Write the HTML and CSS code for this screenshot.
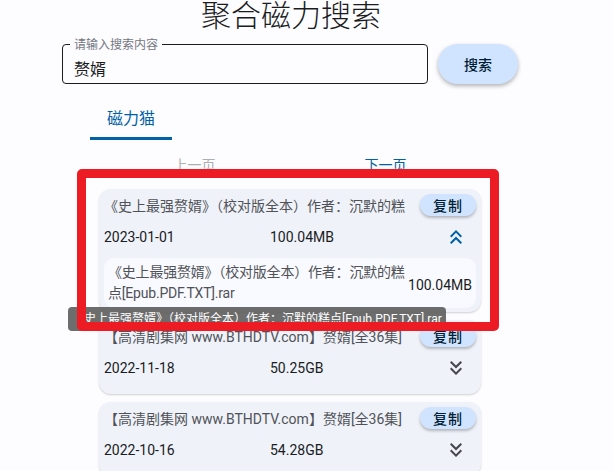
FILE: index.html
```html
<!DOCTYPE html>
<html lang="zh">
<head>
    <meta charset="UTF-8">
    <meta name="viewport" content="width=device-width, initial-scale=1.0">
    <title>聚合磁力搜索</title>
    <link rel="stylesheet" href="styles.css">
</head>
<body>
    <div id="app">
        <h1 class="title">聚合磁力搜索</h1>

        <div class="search-row">
            <div class="field">
                <span class="field-label">请输入搜索内容</span>
                <div class="field-value">赘婿</div>
            </div>
            <button class="search-btn">搜索</button>
        </div>

        <div class="tabs">
            <div class="tab active">磁力猫</div>
        </div>

        <div class="pager">
            <span class="page-btn disabled">上一页</span>
            <span class="page-btn">下一页</span>
        </div>

        <div class="results">
            <div class="card expanded">
                <div class="card-head">
                    <div class="card-title">《史上最强赘婿》（校对版全本）作者：沉默的糕</div>
                    <button class="copy-btn">复制</button>
                </div>
                <div class="card-meta">
                    <span class="date">2023-01-01</span>
                    <span class="size">100.04MB</span>
                    <span class="toggle up">
                        <svg viewBox="0 0 24 24" width="24" height="24"><path d="M6 17.59 7.41 19 12 14.42 16.59 19 18 17.59l-6-6z"/><path d="M6 11l1.41 1.41L12 7.83l4.59 4.58L18 11l-6-6z"/></svg>
                    </span>
                </div>
                <div class="files">
                    <div class="file-name">《史上最强赘婿》（校对版全本）作者：沉默的糕点[Epub.PDF.TXT].rar</div>
                    <div class="file-size">100.04MB</div>
                </div>
            </div>

            <div class="card">
                <div class="card-head">
                    <div class="card-title">【高清剧集网 www.BTHDTV.com】赘婿[全36集]</div>
                    <button class="copy-btn">复制</button>
                </div>
                <div class="card-meta">
                    <span class="date">2022-11-18</span>
                    <span class="size">50.25GB</span>
                    <span class="toggle">
                        <svg viewBox="0 0 24 24" width="24" height="24"><path d="M18 6.41 16.59 5 12 9.58 7.41 5 6 6.41l6 6z"/><path d="M18 13l-1.41-1.41L12 16.17l-4.59-4.58L6 13l6 6z"/></svg>
                    </span>
                </div>
            </div>

            <div class="card">
                <div class="card-head">
                    <div class="card-title">【高清剧集网 www.BTHDTV.com】赘婿[全36集]</div>
                    <button class="copy-btn">复制</button>
                </div>
                <div class="card-meta">
                    <span class="date">2022-10-16</span>
                    <span class="size">54.28GB</span>
                    <span class="toggle">
                        <svg viewBox="0 0 24 24" width="24" height="24"><path d="M18 6.41 16.59 5 12 9.58 7.41 5 6 6.41l6 6z"/><path d="M18 13l-1.41-1.41L12 16.17l-4.59-4.58L6 13l6 6z"/></svg>
                    </span>
                </div>
            </div>
        </div>

        <!-- hover tooltip + screenshot highlight -->
        <div class="tooltip">《史上最强赘婿》（校对版全本）作者：沉默的糕点[Epub.PDF.TXT].rar</div>
        <div class="highlight"></div>
    </div>
</body>
</html>
```

FILE: styles.css
```css
body {
    margin: 0;
    background: #fdfcff;
    color: #1a1c1e;
    font-family: Roboto, "Noto Sans CJK SC", sans-serif;
    overflow: hidden;
}

#app {
    position: relative;
    width: 458px;
    margin-left: 62px;
}

.title {
    margin: 0;
    font-size: 30px;
    line-height: 32px;
    height: 30px;
    font-weight: 300;
    text-align: center;
    color: #1a1c1e;
}

/* search */
.search-row {
    display: flex;
    gap: 10px;
    margin-top: 14px;
}

.field {
    position: relative;
    width: 366px;
    height: 40px;
    box-sizing: border-box;
    border: 1px solid #1a1c1e;
    border-radius: 4px;
}

.field-label {
    position: absolute;
    top: -7px;
    left: 7px;
    padding: 0 4px;
    background: #fdfcff;
    font-size: 12px;
    line-height: 14px;
    color: #74777f;
}

.field-value {
    padding: 15px 11px 0;
    font-size: 16px;
    line-height: 20px;
}

.search-btn {
    width: 80px;
    height: 40px;
    border: none;
    border-radius: 20px;
    background: #d1e4ff;
    color: #001d36;
    font-family: inherit;
    font-size: 14px;
    font-weight: 500;
    box-shadow: 0 2px 4px rgba(0, 0, 0, 0.3);
}

/* tabs */
.tabs {
    display: flex;
    margin: 10px 0 0 28px;
}

.tab {
    width: 82px;
    height: 46px;
    box-sizing: border-box;
    padding-top: 3px;
    display: flex;
    align-items: center;
    justify-content: center;
    font-size: 16px;
    color: #0061a4;
    border-bottom: 3px solid #0061a4;
}

/* pager */
.pager {
    display: flex;
    justify-content: space-around;
    width: 382px;
    margin: 15px 0 0 37px;
    font-size: 14px;
    line-height: 20px;
}

.page-btn {
    color: #0061a4;
}

.page-btn.disabled {
    color: #aeafb3;
}

/* result cards */
.results {
    width: 382px;
    margin: 14px 0 0 37px;
}

.card {
    background: #eff2f9;
    border-radius: 12px;
    padding: 4px 5px 14px;
    margin-bottom: 8px;
    box-shadow: 0 1px 2px rgba(0, 0, 0, 0.18);
}

.card.expanded {
    padding-bottom: 4px;
}

.card-head {
    display: flex;
    align-items: center;
    justify-content: space-between;
    height: 24px;
}

.card-title {
    font-size: 14px;
    color: #505257;
    white-space: nowrap;
    overflow: hidden;
}

.copy-btn {
    flex: none;
    width: 56px;
    height: 22px;
    border: none;
    border-radius: 11px;
    background: #d1e4ff;
    color: #001d36;
    font-family: inherit;
    font-size: 14px;
    font-weight: 500;
    letter-spacing: 1px;
    box-shadow: 0 2px 3px rgba(0, 0, 0, 0.25);
}

.card-meta {
    display: flex;
    align-items: center;
    height: 24px;
    margin-top: 8px;
    font-size: 14px;
}

.date, .size {
    flex: 1;
}

.toggle {
    width: 40px;
    display: flex;
    justify-content: center;
    fill: #45474d;
}

.toggle.up {
    fill: #0061a4;
}

.files {
    display: flex;
    align-items: center;
    margin-top: 9px;
    padding: 4px;
    background: #f9faff;
    border-radius: 10px;
    font-size: 14px;
    line-height: 21px;
    color: #505257;
}

.file-name {
    flex: 1;
    min-width: 0;
    letter-spacing: -0.2px;
}

.file-size {
    flex: none;
    color: #1a1c1e;
    padding-top: 4px;
}

/* overlays */
.tooltip {
    position: absolute;
    left: 6px;
    top: 307px;
    padding: 3px 4px;
    background: rgba(97, 97, 97, 0.92);
    border-radius: 4px;
    color: #fff;
    font-size: 12px;
    line-height: 18px;
    white-space: nowrap;
}

.highlight {
    position: absolute;
    left: 15px;
    top: 169px;
    width: 422px;
    height: 162px;
    box-sizing: border-box;
    border: 9px solid #ed1c24;
    border-radius: 5px;
}
```
